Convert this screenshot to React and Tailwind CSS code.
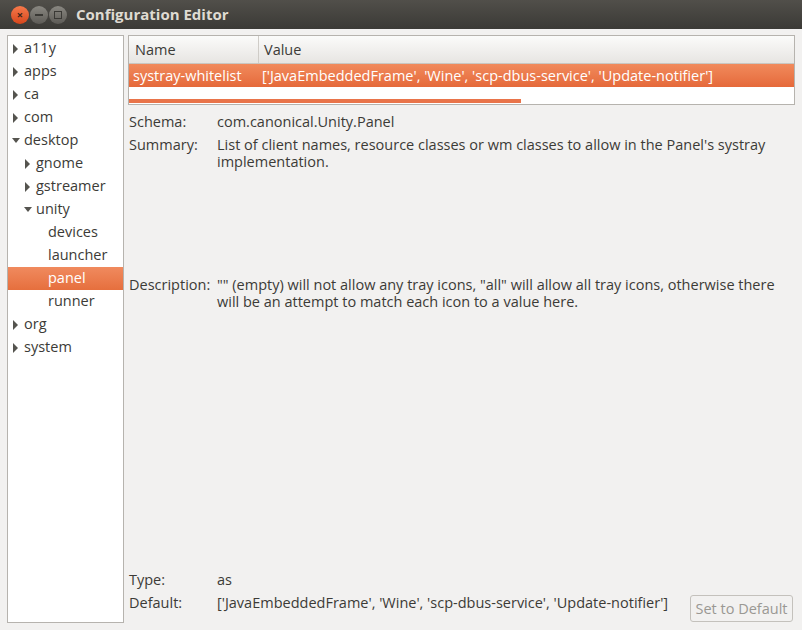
import React from "react";

const FONT = { fontFamily: '"Open Sans", "Noto Sans", sans-serif' };

function Arrow({ open }) {
  return (
    <svg width="8" height="10" viewBox="0 0 8 10" className="shrink-0">
      {open ? (
        <path d="M0 2 L8 2 L4 7 Z" fill="#55544f" />
      ) : (
        <path d="M1 0 L6 5 L1 10 Z" fill="#55544f" />
      )}
    </svg>
  );
}

const tree = [
  { label: "a11y", level: 0, arrow: "closed" },
  { label: "apps", level: 0, arrow: "closed" },
  { label: "ca", level: 0, arrow: "closed" },
  { label: "com", level: 0, arrow: "closed" },
  { label: "desktop", level: 0, arrow: "open" },
  { label: "gnome", level: 1, arrow: "closed" },
  { label: "gstreamer", level: 1, arrow: "closed" },
  { label: "unity", level: 1, arrow: "open" },
  { label: "devices", level: 2 },
  { label: "launcher", level: 2 },
  { label: "panel", level: 2, selected: true },
  { label: "runner", level: 2 },
  { label: "org", level: 0, arrow: "closed" },
  { label: "system", level: 0, arrow: "closed" },
];

function TreeRow({ item }) {
  const pad = [4, 16, 28][item.level];
  return (
    <div
      className={
        item.selected
          ? "flex h-[23px] items-center bg-gradient-to-b from-[#f08a5e] to-[#e66f3d] text-white"
          : "flex h-[23px] items-center text-[#3c3b37]"
      }
      style={{ paddingLeft: pad }}
    >
      <span className="flex w-[12px] justify-start">
        {item.arrow && <Arrow open={item.arrow === "open"} />}
      </span>
      <span className="leading-none">{item.label}</span>
    </div>
  );
}

function DetailRow({ label, children, className = "" }) {
  return (
    <div className={"flex " + className}>
      <div className="w-[88px] shrink-0">{label}</div>
      <div className="flex-1 pr-[8px]">{children}</div>
    </div>
  );
}

export default function App() {
  return (
    <div
      className="flex h-[630px] w-[802px] flex-col bg-[#f2f1f0] text-[14.5px] text-[#3c3b37]"
      style={FONT}
    >
      <div className="flex h-[29px] shrink-0 items-center bg-gradient-to-b from-[#514f4a] to-[#3b3a36] pl-[11px]">
        <div className="flex items-center gap-[1px]">
          <div className="flex h-[18px] w-[18px] items-center justify-center rounded-full bg-gradient-to-b from-[#f7794a] to-[#d6461b] text-[11px] font-bold leading-none text-[#3c2418]">
            ×
          </div>
          <div className="flex h-[18px] w-[18px] items-center justify-center rounded-full bg-gradient-to-b from-[#8a8882] to-[#5d5b56]">
            <div className="h-[2px] w-[8px] bg-[#3a3935]" />
          </div>
          <div className="flex h-[18px] w-[18px] items-center justify-center rounded-full bg-gradient-to-b from-[#8a8882] to-[#5d5b56]">
            <div className="h-[8px] w-[8px] border-[1.5px] border-[#3a3935]" />
          </div>
        </div>
        <div className="ml-[9px] text-[15px] font-bold text-[#dfdbd2]">
          Configuration Editor
        </div>
      </div>

      <div className="flex flex-1 gap-[4px] px-[7px] pb-[7px] pt-[6px]">
        <div className="w-[117px] border border-[#b6b3ae] bg-white pt-[1px]">
          {tree.map((item) => (
            <TreeRow key={item.label} item={item} />
          ))}
        </div>

        <div className="flex flex-1 flex-col">
          <div className="h-[70px] border border-[#b6b3ae] bg-white">
            <div className="flex h-[28px] border-b border-[#c9c6c1] bg-gradient-to-b from-[#fbfbfa] to-[#e7e5e2]">
              <div className="flex w-[130px] items-center border-r border-[#cfccc7] pl-[6px] pt-[1px]">
                Name
              </div>
              <div className="flex items-center pl-[5px] pt-[1px]">Value</div>
            </div>
            <div className="flex h-[23px] items-center whitespace-nowrap bg-gradient-to-b from-[#f18a5c] to-[#e5693a] text-white">
              <div className="w-[130px] pl-[4px]">systray-whitelist</div>
              <div className="pl-[3px]">
                ['JavaEmbeddedFrame', 'Wine', 'scp-dbus-service', 'Update-notifier']
              </div>
            </div>
            <div className="mt-[12px] h-[4px] w-[392px] bg-[#e9744a]" />
          </div>

          <div className="flex flex-1 flex-col pl-[1px] pt-[5px]">
            <DetailRow label="Schema:" className="h-[23px] items-center">
              com.canonical.Unity.Panel
            </DetailRow>
            <DetailRow label="Summary:" className="leading-[17px] pt-[3px]">
              List of client names, resource classes or wm classes to allow in
              the Panel's systray implementation.
            </DetailRow>
            <DetailRow label="Description:" className="mt-[106px] leading-[17px]">
              "" (empty) will not allow any tray icons, "all" will allow all
              tray icons, otherwise there will be an attempt to match each icon
              to a value here.
            </DetailRow>
            <div className="flex-1" />
            <DetailRow label="Type:" className="h-[23px] items-center">
              as
            </DetailRow>
            <div className="flex h-[32px] items-start">
              <div className="w-[88px] shrink-0 pt-[2px] leading-[20px]">Default:</div>
              <div className="flex-1 whitespace-nowrap pt-[2px] leading-[20px]">
                ['JavaEmbeddedFrame', 'Wine', 'scp-dbus-service', 'Update-notifier']
              </div>
              <div className="mr-[2px] mt-[4px] flex h-[27px] w-[103px] shrink-0 items-center justify-center rounded-[3px] border border-[#c4c1bc] bg-[#f2f1f0] text-[#9a9893]">
                Set to Default
              </div>
            </div>
          </div>
        </div>
      </div>
    </div>
  );
}
